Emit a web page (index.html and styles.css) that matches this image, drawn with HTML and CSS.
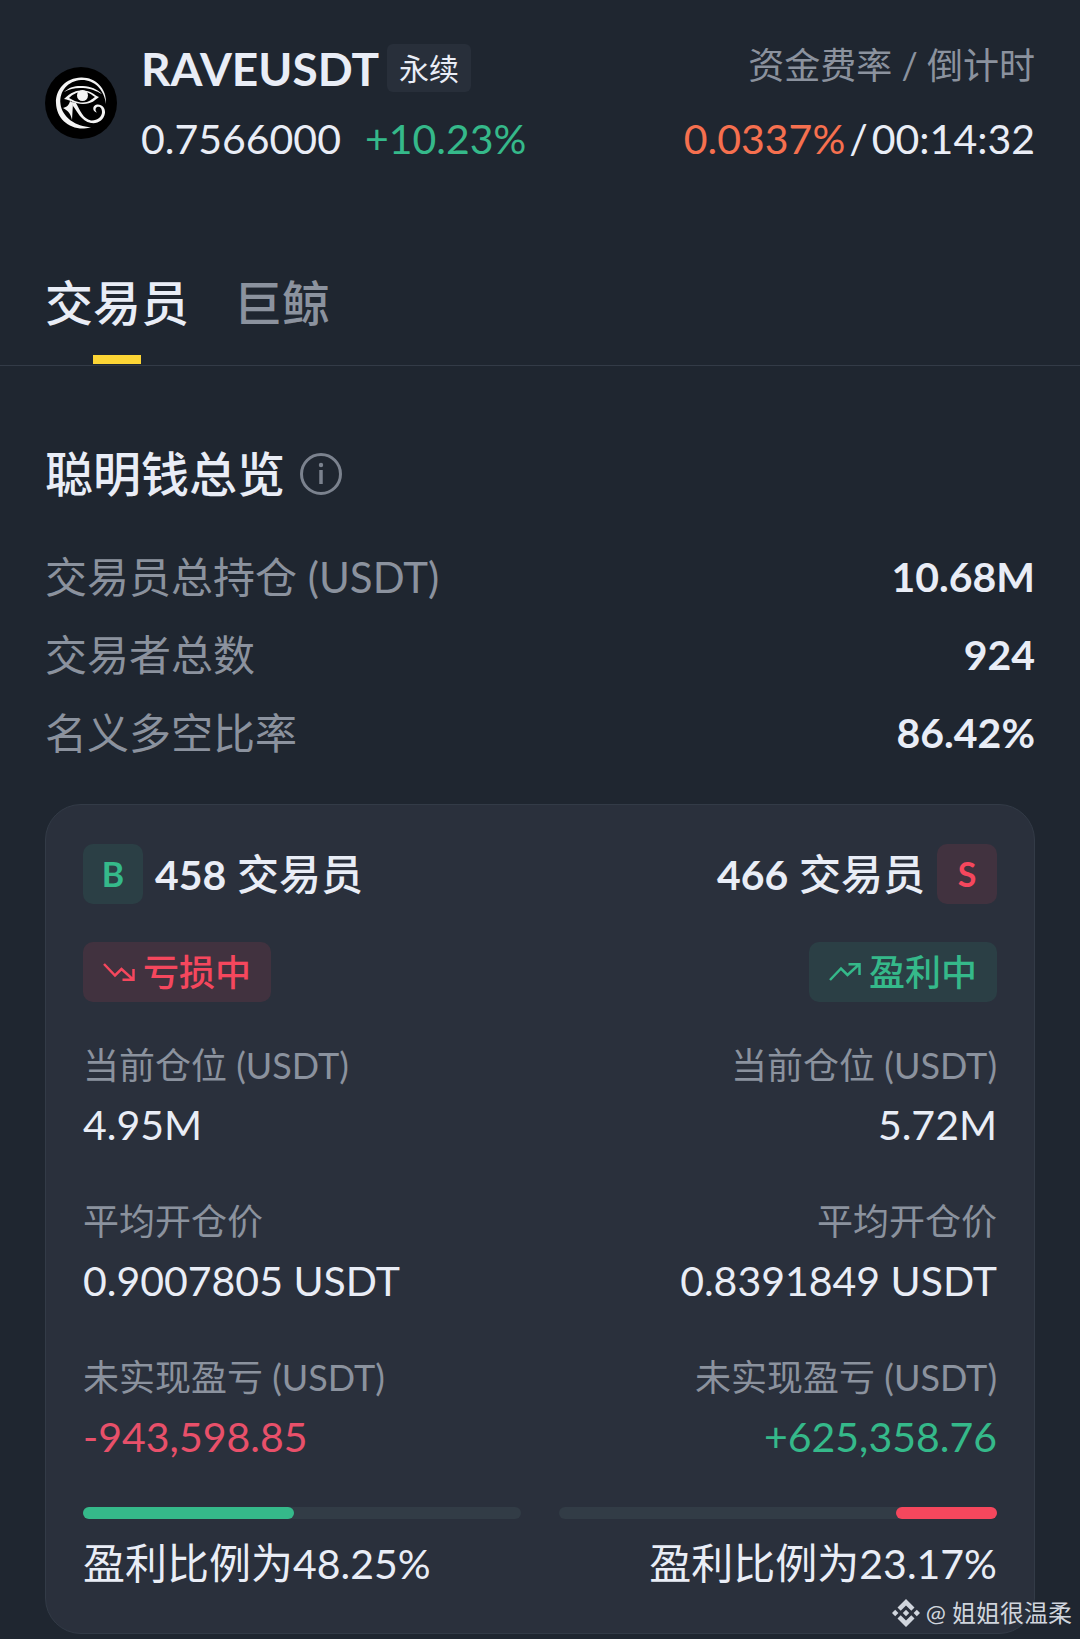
FILE: index.html
```html
<!DOCTYPE html>
<html lang="zh-CN">
<head>
<meta charset="utf-8">
<meta name="viewport" content="width=device-width, initial-scale=1">
<title>RAVEUSDT 永续</title>
<link rel="stylesheet" href="styles.css">
</head>
<body>
<div class="page">
  <header class="ticker">
    <svg class="coin" viewBox="0 0 72 72" aria-hidden="true">
      <circle cx="36" cy="36" r="36" fill="#000"/>
      <g fill="#f4f4f4">
        <path d="M61 37C62 21 50 10 36 10.500C21 11 10.500 22 11 36C11.500 51 23 62 39 61.500C42 61.400 44 60.800 46 60C31 60 17 50 15.500 37C14 24 23 14 36 13C49 12.500 59 22 61 37Z"/>
        <path d="M19 25C25 19.500 31 18.500 38 19C46 19.500 52 22 57 27C51 24 46 21.500 38 21C30 20.500 25 22 19 25Z"/>
        <path fill-rule="evenodd" d="M19 32C26 25 31 23.500 38 23.500C46 23.500 49 28 54 30C50 33 47 37 38 37C29 37 26 33 19 32ZM24 31C28 33 31 35.500 38 35.500C44 35.500 47 32 50 30C47 28 44 25 38 25C31 25 27 28 24 31Z"/>
        <circle cx="37.500" cy="28.500" r="5.500"/>
        <path d="M27 35L31 36C35 43 38 52 46 53.500C52 54 57 50 57 45C57 40 54 39 52 40C50 41 50 44 52 45.500C47 45 47 38 52 37.500C57 37 60.500 41 60 46C59 53 53 57 46 56C36 54 32 44 28 39Z"/>
        <path d="M25 34L28 36L27 53C26 48 24 44 18 41C22 40 24 38 25 34Z"/>
      </g>
    </svg>
    <div class="quote">
      <div class="line"><h1 class="symbol">RAVEUSDT</h1><span class="tag">永续</span></div>
      <div class="line figures"><span>0.7566000</span><span class="up">+10.23%</span></div>
    </div>
    <div class="funding">
      <div class="line caption">资金费率 / 倒计时</div>
      <div class="line timer"><span class="rate">0.0337%</span><span>/</span><span>00:14:32</span></div>
    </div>
  </header>

  <nav class="tabs" role="tablist">
    <button class="tab active" role="tab" aria-selected="true">交易员</button>
    <button class="tab" role="tab" aria-selected="false">巨鲸</button>
  </nav>

  <main class="overview">
    <div class="heading">
      <h2 class="title">聪明钱总览</h2>
      <button class="info" aria-label="说明">
        <svg viewBox="0 0 42 42" width="42" height="42" fill="none" stroke="currentColor" stroke-width="3"><circle cx="21" cy="21" r="19.500"/><path d="M21 17v14" stroke-width="3.500"/><circle cx="21" cy="12" r="2.200" fill="currentColor" stroke="none"/></svg>
      </button>
    </div>
    <dl class="stats">
      <div class="stat"><dt>交易员总持仓 <span class="unit">(USDT)</span></dt><dd>10.68M</dd></div>
      <div class="stat"><dt>交易者总数</dt><dd>924</dd></div>
      <div class="stat"><dt>名义多空比率</dt><dd>86.42%</dd></div>
    </dl>

    <section class="card">
      <div class="side">
        <div class="count"><span class="mark long">B</span><span><span class="num">458</span> 交易员</span></div>
        <div class="status loss">
          <svg viewBox="0 0 32 20" width="32" height="20" fill="none" stroke="currentColor" stroke-width="2.500"><path d="M1 2L12 13.500L18.500 7L30 17.500M19.500 17.800H30.500V7"/></svg>亏损中
        </div>
        <dl class="details">
          <div><dt>当前仓位 <span class="unit">(USDT)</span></dt><dd>4.95M</dd></div>
          <div><dt>平均开仓价</dt><dd>0.9007805 USDT</dd></div>
          <div><dt>未实现盈亏 <span class="unit">(USDT)</span></dt><dd class="down">-943,598.85</dd></div>
        </dl>
        <div class="bar"><div class="fill green" style="width:48.25%"></div></div>
        <p class="ratio">盈利比例为<span class="num">48.25%</span></p>
      </div>
      <div class="side right">
        <div class="count"><span><span class="num">466</span> 交易员</span><span class="mark short">S</span></div>
        <div class="status profit">
          <svg viewBox="0 0 32 20" width="32" height="20" fill="none" stroke="currentColor" stroke-width="2.500"><path d="M1 18L12 6.500L18.500 13L30 2.500M19.500 2.200H30.500V13"/></svg>盈利中
        </div>
        <dl class="details">
          <div><dt>当前仓位 <span class="unit">(USDT)</span></dt><dd>5.72M</dd></div>
          <div><dt>平均开仓价</dt><dd>0.8391849 USDT</dd></div>
          <div><dt>未实现盈亏 <span class="unit">(USDT)</span></dt><dd class="up">+625,358.76</dd></div>
        </dl>
        <div class="bar"><div class="fill red" style="width:23.17%"></div></div>
        <p class="ratio">盈利比例为<span class="num">23.17%</span></p>
      </div>
    </section>
  </main>

  <div class="watermark">
    <svg viewBox="0 0 28 28" width="28" height="28" fill="currentColor" aria-hidden="true"><path d="M14 0L22.500 8.500L19.300 11.700L14 6.400L8.700 11.700L5.500 8.500ZM14 28L22.500 19.500L19.300 16.300L14 21.600L8.700 16.300L5.500 19.500ZM14 10.800L17.200 14L14 17.200L10.800 14ZM3.200 10.800L6.400 14L3.200 17.200L0 14ZM24.800 10.800L28 14L24.800 17.200L21.600 14Z"/></svg>
    <span>@ 姐姐很温柔</span>
  </div>
</div>
</body>
</html>
```
FILE: styles.css
```css
* { box-sizing: border-box; }

body {
  margin: 0;
  background: #1f2630;
  color: #e9edf6;
  font-family: Lato, "Noto Sans CJK SC", sans-serif;
  font-size: 41px;
}

h1, h2, p, dl, dd { margin: 0; }

button {
  padding: 0;
  border: 0;
  background: none;
  color: inherit;
  font: inherit;
}

svg { display: block; flex: none; }

.page { position: relative; padding-bottom: 5px; }

.ticker {
  display: flex;
  align-items: flex-start;
  padding: 40px 45px 0;
}
.coin { width: 72px; height: 72px; margin: 27px 24px 0 0; }
.quote, .funding { display: grid; gap: 14px; }
.funding { margin-left: auto; }
.line { display: flex; align-items: center; height: 56px; white-space: nowrap; }
.symbol { font-size: 46px; font-weight: 700; }
.tag {
  margin-left: 8px;
  padding: 0 12px;
  border-radius: 6px;
  background: #282f3a;
  font-size: 30px;
  line-height: 48px;
}
.figures { gap: 24px; }
.caption { justify-content: flex-end; color: #8b929e; font-size: 36px; line-height: 50px; align-items: flex-start; }
.timer { justify-content: flex-end; gap: 4px; }
.rate { color: #f6704f; }
.up { color: #35b98a; }
.down { color: #e8506a; }

.tabs {
  display: flex;
  gap: 45px;
  margin-top: 105px;
  padding: 0 45px;
  border-bottom: 1px solid #333b47;
}
.tab {
  position: relative;
  padding-bottom: 30px;
  color: #8b929e;
  font-size: 48px;
  font-weight: 500;
  line-height: 64px;
}
.tab.active { color: #e9edf6; }
.tab.active::after {
  content: "";
  position: absolute;
  bottom: 1px;
  left: calc(50% - 24px);
  width: 48px;
  height: 9px;
  background: #fcd535;
}

.overview { padding: 76px 45px 0; }
.heading { display: flex; align-items: center; gap: 15px; }
.title { font-size: 48px; font-weight: 500; line-height: 64px; }
.info { color: #7b828e; }

.stats { margin-top: 32px; }
.stat { display: flex; justify-content: space-between; line-height: 78px; }
.stat dt { color: #8b929e; font-size: 42px; }
.stat dd { font-weight: 700; }
.unit, .num { line-height: 1; }
.stat .unit { font-size: 42px; }

.card {
  display: grid;
  grid-template-columns: 1fr 1fr;
  gap: 38px;
  margin-top: 32px;
  padding: 39px 37px 40px;
  border: 1px solid #333b47;
  border-radius: 36px;
  background: #2a303c;
}
.side { display: flex; flex-direction: column; align-items: flex-start; }
.side.right { align-items: flex-end; text-align: right; }
.count {
  display: flex;
  align-items: center;
  gap: 12px;
  font-size: 42px;
  font-weight: 500;
  line-height: 60px;
}
.num { font-size: 41px; }
.count .num { font-weight: 700; }
.mark {
  width: 60px;
  height: 60px;
  border-radius: 10px;
  font-size: 34px;
  font-weight: 700;
  text-align: center;
}
.long, .profit { background: #2b3f45; color: #35b98a; }
.short, .loss { background: #41323f; color: #f5475d; }
.status {
  display: flex;
  align-items: center;
  gap: 8px;
  margin-top: 38px;
  padding: 0 20px;
  border-radius: 10px;
  font-size: 36px;
  font-weight: 500;
  line-height: 60px;
}
.details { display: grid; gap: 36px; margin-top: 33px; line-height: 60px; }
.details dt { color: #8b929e; font-size: 36px; }
.details .unit { font-size: 36px; }
.bar {
  display: flex;
  width: 100%;
  height: 12px;
  margin-top: 40px;
  border-radius: 6px;
  background: #323c46;
}
.right .bar { justify-content: flex-end; }
.fill { border-radius: 6px; }
.green { background: #35b98a; }
.red { background: #f5475d; }
.ratio { margin-top: 14px; font-size: 42px; line-height: 60px; }

.watermark {
  position: absolute;
  right: 8px;
  bottom: 8px;
  display: flex;
  align-items: center;
  gap: 6px;
  color: #d0d5dd;
  font-size: 24px;
  line-height: 36px;
}
```
